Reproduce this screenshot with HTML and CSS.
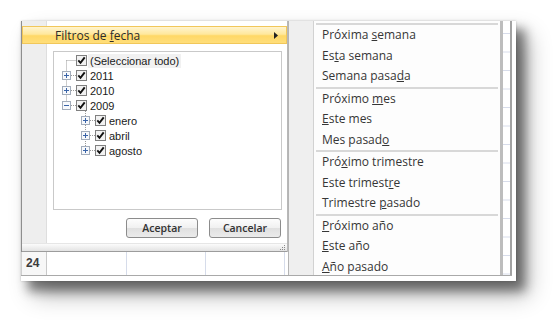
FILE: index.html
```html
<!DOCTYPE html>
<html>
<head>
    <meta charset="UTF-8">
    <title>Filtros de fecha</title>
    <link rel="stylesheet" href="styles.css">
</head>
<body>

<svg class="defs">
    <symbol id="cb" viewBox="0 0 11 11">
        <rect x=".5" y=".5" width="10" height="10" fill="#f2f2f2" stroke="#808080"/>
        <path d="M2.3 5.4l2.2 2.4 4.2-5.4" fill="none" stroke="#111" stroke-width="1.9"/>
    </symbol>
    <symbol id="plus" viewBox="0 0 9 9">
        <rect x=".5" y=".5" width="8" height="8" fill="#f7f9fc" stroke="#a3adbb"/>
        <path d="M2 4.5h5M4.5 2v5" stroke="#3a64a8"/>
    </symbol>
    <symbol id="minus" viewBox="0 0 9 9">
        <rect x=".5" y=".5" width="8" height="8" fill="#f7f9fc" stroke="#a3adbb"/>
        <path d="M2 4.5h5" stroke="#3a64a8"/>
    </symbol>
</svg>

<div class="stage">
    <div class="shot">
        <div class="frame">
            <div class="left">
                <div class="panel">
                    <div class="topstrip"></div>
                    <div class="hilite">
                        <span>Filtros de <u>f</u>echa</span>
                        <svg class="arrow" width="4" height="7" viewBox="0 0 4 7"><path d="M0 0l4 3.5L0 7z" fill="#222"/></svg>
                    </div>

                    <div class="tree">
                        <svg class="lines" width="227" height="157">
                            <path d="M12.5 8.5H22M12.5 8.5V53.5M17 23.5H22M17 38.5H22M17 53.5H22M31.5 59V98.5M36 68.5H41M36 83.5H41M36 98.5H41"
                                  stroke="#9a9a9a" stroke-dasharray="1 1" fill="none"/>
                        </svg>
                        <div class="node top">
                            <span class="spacer"></span>
                            <svg class="cb"><use href="#cb"/></svg>
                            <span class="label all">(Seleccionar todo)</span>
                        </div>
                        <div class="node top">
                            <svg class="exp"><use href="#plus"/></svg>
                            <svg class="cb"><use href="#cb"/></svg>
                            <span class="label">2011</span>
                        </div>
                        <div class="node top">
                            <svg class="exp"><use href="#plus"/></svg>
                            <svg class="cb"><use href="#cb"/></svg>
                            <span class="label">2010</span>
                        </div>
                        <div class="node top">
                            <svg class="exp"><use href="#minus"/></svg>
                            <svg class="cb"><use href="#cb"/></svg>
                            <span class="label">2009</span>
                        </div>
                        <div class="node child">
                            <svg class="exp"><use href="#plus"/></svg>
                            <svg class="cb"><use href="#cb"/></svg>
                            <span class="label">enero</span>
                        </div>
                        <div class="node child">
                            <svg class="exp"><use href="#plus"/></svg>
                            <svg class="cb"><use href="#cb"/></svg>
                            <span class="label">abril</span>
                        </div>
                        <div class="node child">
                            <svg class="exp"><use href="#plus"/></svg>
                            <svg class="cb"><use href="#cb"/></svg>
                            <span class="label">agosto</span>
                        </div>
                    </div>

                    <div class="buttons">
                        <button class="btn">Aceptar</button>
                        <button class="btn">Cancelar</button>
                    </div>

                    <div class="grip">
                        <svg class="dots" width="6" height="6" viewBox="0 0 6 6">
                            <rect x="4" y="0" width="1" height="1" fill="#8a8a8a"/>
                            <rect x="2" y="2" width="1" height="1" fill="#8a8a8a"/>
                            <rect x="4" y="2" width="1" height="1" fill="#8a8a8a"/>
                            <rect x="0" y="4" width="1" height="1" fill="#8a8a8a"/>
                            <rect x="2" y="4" width="1" height="1" fill="#8a8a8a"/>
                            <rect x="4" y="4" width="1" height="1" fill="#8a8a8a"/>
                        </svg>
                    </div>
                </div>

                <div class="row24">
                    <div class="rowhead">24</div>
                    <div class="cell"></div>
                    <div class="cell narrow"></div>
                    <div class="cell narrow"></div>
                </div>
            </div>

            <div class="mid"></div>

            <div class="menu">
                <div class="sep"></div>
                <div class="item">Próxima <u>s</u>emana</div>
                <div class="item">Es<u>t</u>a semana</div>
                <div class="item">Semana pasa<u>d</u>a</div>
                <div class="sep"></div>
                <div class="item">Próximo <u>m</u>es</div>
                <div class="item"><u>E</u>ste mes</div>
                <div class="item">Mes pasad<u>o</u></div>
                <div class="sep"></div>
                <div class="item">Pró<u>x</u>imo trimestre</div>
                <div class="item">Este trimest<u>r</u>e</div>
                <div class="item">Trimestre <u>p</u>asado</div>
                <div class="sep"></div>
                <div class="item"><u>P</u>róximo año</div>
                <div class="item"><u>E</u>ste año</div>
                <div class="item"><u>A</u>ño pasado</div>
            </div>

            <div class="edge"></div>
        </div>
    </div>
</div>

</body>
</html>
```

FILE: styles.css
```css
html,
body {
    height: 100%;
}
body {
    margin: 0;
    background-color: #fff;
    font-family: "Open Sans", sans-serif;
}
.defs {
    display: none;
}
.stage {
    height: 100%;
    box-sizing: border-box;
    padding: 21px 0 0 21px;
}
.shot {
    width: 495px;
    height: 260px;
    box-sizing: border-box;
    padding: 0 4px 5px 0;
    background-color: #fff;
    box-shadow: 0 0 2px rgba(0, 0, 0, 0.2), 8px 9px 10px 1px rgba(0, 0, 0, 0.45), 12px 14px 22px rgba(0, 0, 0, 0.3);
}
.frame {
    display: flex;
    height: 255px;
    box-sizing: border-box;
    border-bottom: 1px solid #a9a9a9;
    overflow: hidden;
}
.left {
    width: 267px;
    display: flex;
    flex-direction: column;
}
.panel {
    flex: 1;
    display: flex;
    flex-direction: column;
    border-left: 1px solid #8e8e8e;
    border-right: 1px solid #b8b8b8;
    background: linear-gradient(to right, #eeeeee 24px, #dedede 24px 25px, #fff 25px);
}
.topstrip {
    height: 5px;
}
.hilite {
    height: 18px;
    box-sizing: border-box;
    display: flex;
    align-items: center;
    justify-content: space-between;
    padding: 0 8px 0 32px;
    border: 1px solid #f1c75a;
    background: linear-gradient(#fff4cf, #ffe89c 45%, #ffd866 55%, #ffde7a);
    font-size: 12px;
    color: #2b2b2b;
}
.tree {
    position: relative;
    margin: 7px 5px 0 31px;
    height: 159px;
    box-sizing: border-box;
    border: 1px solid #c9c9c9;
    padding-top: 1px;
    background-color: #fff;
    font-family: "Liberation Sans", Arial, sans-serif;
    font-size: 11px;
    color: #1a1a1a;
}
.tree .lines {
    position: absolute;
    top: 0;
    left: 0;
}
.node {
    position: relative;
    display: flex;
    align-items: center;
    height: 15px;
}
.node.top {
    padding-left: 8px;
}
.node.child {
    padding-left: 27px;
}
.node .spacer,
.node .exp {
    width: 9px;
    height: 9px;
    flex: none;
}
.node .cb {
    width: 11px;
    height: 11px;
    margin-left: 5px;
    flex: none;
}
.node .label {
    margin-left: 3px;
}
.node .label.all {
    margin-left: 1px;
    padding: 0 2px;
    background-color: #f1f1f1;
    line-height: 14px;
}
.buttons {
    display: flex;
    justify-content: flex-end;
    gap: 11px;
    margin-top: 8px;
    padding-right: 6px;
}
.btn {
    width: 72px;
    height: 20px;
    padding: 0;
    border: 1px solid #8c8c8c;
    border-radius: 3px;
    background: linear-gradient(#fdfdfd, #f0f0f0 50%, #e0e0e0 52%, #ebebeb);
    font-family: "Open Sans", sans-serif;
    font-size: 10.5px;
    font-weight: 600;
    color: #333;
}
.grip {
    position: relative;
    margin-top: auto;
    height: 9px;
    box-sizing: border-box;
    border-top: 1px solid #e6e6e6;
    border-bottom: 1px solid #9c9c9c;
    background: linear-gradient(#fbfbfb, #e3e3e3);
}
.grip .dots {
    position: absolute;
    right: 1px;
    bottom: 0;
}
.row24 {
    display: flex;
    height: 23px;
    border-left: 1px solid #cfcfcf;
    background-color: #fff;
}
.rowhead {
    width: 25px;
    box-sizing: border-box;
    border-right: 1px solid #c9c9c9;
    background-color: #f7f7f7;
    padding-left: 4px;
    font-family: "Liberation Sans", Arial, sans-serif;
    font-size: 12px;
    font-weight: bold;
    line-height: 23px;
    color: #3c3c3c;
}
.cell {
    width: 80px;
    box-sizing: border-box;
    border-right: 1px solid #d6dcea;
}
.cell.narrow {
    width: 79px;
}
.mid {
    width: 26px;
    box-sizing: border-box;
    border-left: 1px solid #b4b4b4;
    border-right: 1px solid #d2d2d2;
    background-color: #efefef;
}
.menu {
    width: 186px;
    box-sizing: border-box;
    padding-top: 2px;
    background-color: #fdfdfd;
    overflow: hidden;
}
.menu .sep {
    height: 2px;
    margin: 0 2px;
    background-color: #d8d8d8;
}
.menu .item {
    height: 20.5px;
    line-height: 20.5px;
    padding-left: 8px;
    font-size: 12px;
    color: #363636;
}
.edge {
    width: 12px;
    box-sizing: border-box;
    border-left: 3px solid #bdbdbd;
    border-right: 2px solid #a2a2a2;
    background: repeating-linear-gradient(to bottom, transparent 0 17.5px, #d6dcea 17.5px 18.5px) 0 -5.5px / 100% 18.5px, #fff;
}
```
